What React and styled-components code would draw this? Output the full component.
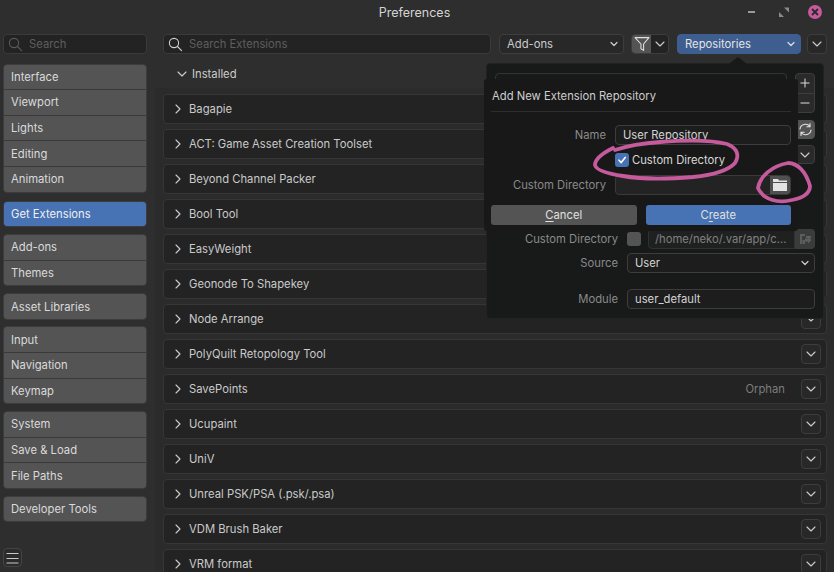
import React from 'react'
import styled, { createGlobalStyle } from 'styled-components'

const Global = createGlobalStyle`
  html, body { margin: 0; padding: 0; background: #2e2e2e; }
  body { font-family: Inter, "Noto Sans", sans-serif; font-size: 11.25px; color: #d0d0d0; overflow: hidden; }
  * { box-sizing: border-box; }
`

const Window = styled.div`
  position: relative;
  width: 834px;
  height: 572px;
  overflow: hidden;
  background: #2e2e2e;
`

const TitleBar = styled.div`
  height: 25px;
  display: flex;
  align-items: center;
  justify-content: center;
  padding-right: 5px;
  position: relative;
  font-size: 12.5px;
  color: #d4d4d4;
`

const WindowButtons = styled.div`
  position: absolute;
  right: 12px;
  top: 5px;
  display: flex;
  align-items: center;
  gap: 17px;
`

const Close = styled.div`
  width: 14px;
  height: 14px;
  border-radius: 50%;
  background: #c55a9c;
  display: flex;
  align-items: center;
  justify-content: center;
`

const Body = styled.div`
  display: flex;
  height: 547px;
`

const Sidebar = styled.div`
  width: 155px;
  flex: none;
  position: relative;
  padding: 9px 8px 0 3px;
`

const Main = styled.div`
  flex: 1;
  min-width: 0;
  display: flex;
  flex-direction: column;
`

const SearchBox = styled.div`
  height: 20px;
  width: ${p => p.$w || 'auto'};
  flex: ${p => (p.$w ? 'none' : '1')};
  display: flex;
  align-items: center;
  gap: 6px;
  padding-left: 4px;
  background: #232323;
  border: 1px solid #3a3a3a;
  border-radius: 4px;
  color: #5e5e5e;
`

const NavGroup = styled.div`
  margin-top: ${p => p.$mt}px;
  border-radius: 4px;
  overflow: hidden;
  border: 1px solid #3c3c3c;
  display: flex;
  flex-direction: column;
  gap: 1px;
  background: #3a3a3a;
`

const NavItem = styled.div`
  height: 24.6px;
  display: flex;
  align-items: center;
  padding-left: 7px;
  background: ${p => (p.$active ? '#4772b3' : '#545454')};
  color: ${p => (p.$active ? '#f0f0f0' : '#dadada')};
`

const MenuButton = styled.div`
  position: absolute;
  left: 3px;
  top: 523px;
  width: 19px;
  height: 19px;
  border: 1px solid #444;
  border-radius: 4px;
  display: flex;
  align-items: center;
  justify-content: center;
  background: #2b2b2b;
`

const Toolbar = styled.div`
  height: 20px;
  margin: 9px 7px 0 8px;
  display: flex;
  align-items: center;
`

const Select = styled.div`
  height: 20px;
  width: ${p => p.$w}px;
  margin-left: ${p => p.$ml || 0}px;
  flex: none;
  display: flex;
  align-items: center;
  justify-content: space-between;
  padding: 0 5px 0 7px;
  border-radius: 4px;
  background: ${p => (p.$blue ? '#3e5e90' : '#282828')};
  border: 1px solid ${p => (p.$blue ? '#3e5e90' : '#3d3d3d')};
  color: ${p => (p.$blue ? '#e4e4e4' : '#cccccc')};
`

const IconToggle = styled.div`
  height: 20px;
  width: 38px;
  margin-left: 7px;
  flex: none;
  display: flex;
  border-radius: 4px;
  overflow: hidden;
  border: 1px solid #3d3d3d;
  background: #232323;
`

const ToggleOn = styled.div`
  width: 19px;
  background: #545454;
  display: flex;
  align-items: center;
  justify-content: center;
`

const ToggleRest = styled.div`
  flex: 1;
  display: flex;
  align-items: center;
  justify-content: center;
`

const SquareButton = styled.div`
  width: 20px;
  height: 20px;
  margin-left: ${p => p.$ml || 0}px;
  flex: none;
  display: flex;
  align-items: center;
  justify-content: center;
  border: 1px solid #3d3d3d;
  border-radius: 4px;
  background: #282828;
`

const Heading = styled.div`
  height: 29px;
  margin-top: 5px;
  padding-left: 22px;
  display: flex;
  align-items: center;
  gap: 5px;
  color: #cccccc;
`

const List = styled.div`
  flex: 1;
  background: #2b2b2b;
  padding: 6px 7px 0 8px;
  display: flex;
  flex-direction: column;
  gap: 5px;
  overflow: hidden;
`

const Row = styled.div`
  height: 30px;
  flex: none;
  display: flex;
  align-items: center;
  padding: 0 5px 0 9px;
  gap: 6px;
  background: #232323;
  border: 1px solid #363636;
  border-radius: 4px;
  color: #cacaca;
`

const RowName = styled.span`
  flex: 1;
`

const Status = styled.span`
  color: #7c7c7c;
  margin-right: 10px;
`

const Popover = styled.div`
  position: absolute;
  left: 486px;
  top: 63px;
  width: 338px;
  height: 256px;
  background: #181a1a;
  border: 1px solid #222;
  border-radius: 4px;
  padding: 9px 8px 0 8px;
  &::before {
    content: '';
    position: absolute;
    left: 242px;
    top: -7px;
    border-left: 9px solid transparent;
    border-right: 9px solid transparent;
    border-bottom: 7px solid #181a1a;
  }
`

const PopoverTop = styled.div`
  display: flex;
  justify-content: space-between;
  height: 156px;
`

const RepoList = styled.div`
  width: 292px;
  height: 40px;
  border: 1px solid #333;
  border-radius: 4px;
`

const Tools = styled.div`
  width: 20px;
  display: flex;
  flex-direction: column;
  gap: 6px;
`

const PlusMinus = styled.div`
  height: 40px;
  border: 1px solid #3d3d3d;
  border-radius: 4px;
  display: flex;
  flex-direction: column;
  background: #2a2a2a;
`

const PmCell = styled.div`
  flex: 1;
  display: flex;
  align-items: center;
  justify-content: center;
  & + & { border-top: 1px solid #3d3d3d; }
`

const ToolButton = styled.div`
  height: 19px;
  margin-top: ${p => p.$mt || 0}px;
  border-radius: 4px;
  background: ${p => (p.$filled ? '#545454' : '#2a2a2a')};
  border: 1px solid ${p => (p.$filled ? '#545454' : '#3d3d3d')};
  display: flex;
  align-items: center;
  justify-content: center;
`

const FormRow = styled.div`
  display: flex;
  align-items: center;
  height: 20px;
  margin-top: ${p => p.$mt || 0}px;
`

const FormLabel = styled.div`
  width: ${p => p.$w}px;
  text-align: right;
  padding-right: 9px;
  flex: none;
  color: #8a8a8a;
`

const Check = styled.div`
  width: 14px;
  height: 14px;
  border-radius: 3px;
  flex: none;
  background: ${p => (p.$on ? '#4772b3' : '#545454')};
  display: flex;
  align-items: center;
  justify-content: center;
`

const Field = styled.div`
  flex: 1;
  height: 20px;
  display: flex;
  align-items: center;
  justify-content: space-between;
  padding: 0 5px 0 ${p => (p.$muted ? 6 : 7)}px;
  background: ${p => (p.$muted ? '#1f2121' : '#1d1d1d')};
  border: 1px solid ${p => (p.$muted ? '#303232' : '#3d3d3d')};
  border-radius: ${p => (p.$muted ? '4px 0 0 4px' : '4px')};
  color: ${p => (p.$muted ? '#808080' : '#d4d4d4')};
  margin-left: ${p => p.$ml || 0}px;
`

const PathIcon = styled.div`
  width: 20px;
  height: 20px;
  background: #3a3c3c;
  border-radius: 0 4px 4px 0;
  flex: none;
  display: flex;
  align-items: center;
  justify-content: center;
`

const Dialog = styled.div`
  position: absolute;
  left: 484px;
  top: 79px;
  width: 314px;
  height: 152px;
  background: #181818;
  border-radius: 3px;
  padding: 0 7px;
`

const DialogTitle = styled.div`
  height: 33px;
  display: flex;
  align-items: center;
  padding: 1px 0 0 1px;
  color: #cecece;
  border-bottom: 1px solid #2e2e2e;
`

const DialogForm = styled.div`
  margin-top: 13px;
  display: flex;
  flex-direction: column;
  gap: 5px;
`

const CheckLabel = styled.span`
  margin-left: 3px;
  color: #d8d8d8;
`

const DialogPath = styled.div`
  flex: 1;
  height: 20px;
  display: flex;
  justify-content: flex-end;
  background: #232323;
  border: 1px solid #3a3a3a;
  border-radius: 4px;
  overflow: hidden;
`

const FolderButton = styled.div`
  width: 20px;
  background: #505050;
  display: flex;
  align-items: center;
  justify-content: center;
`

const DialogActions = styled.div`
  display: flex;
  gap: 9px;
  margin-top: 10px;
`

const Action = styled.div`
  flex: 1;
  height: 20px;
  border-radius: 3px;
  display: flex;
  align-items: center;
  justify-content: center;
  background: ${p => (p.$primary ? '#4772b3' : '#545454')};
  color: #e0e0e0;
  & u { text-underline-offset: 2px; }
`

const Marks = styled.svg`
  position: absolute;
  left: 0;
  top: 0;
  pointer-events: none;
`

const Chevron = ({ dir = 'down', size = 10, color = '#cccccc' }) => (
  <svg width={size} height={size} viewBox="0 0 10 10" fill="none" stroke={color} strokeWidth="1.1" strokeLinecap="round" strokeLinejoin="round">
    {dir === 'down' ? <path d="M1 3 L5 7 L9 3" /> : <path d="M3 1 L7 5 L3 9" />}
  </svg>
)

const SmallChevron = ({ color = '#cfcfcf' }) => (
  <svg width="8" height="8" viewBox="0 0 8 8" fill="none" stroke={color} strokeWidth="1.2" strokeLinecap="round" strokeLinejoin="round">
    <path d="M1 2.5 L4 5.5 L7 2.5" />
  </svg>
)

const Magnifier = ({ color }) => (
  <svg width="15" height="15" viewBox="0 0 15 15" fill="none" stroke={color} strokeWidth="1.1" strokeLinecap="round">
    <circle cx="6" cy="6" r="4.6" />
    <path d="M9.5 9.5 L13.6 13.6" />
  </svg>
)

const groups = [
  { items: ['Interface', 'Viewport', 'Lights', 'Editing', 'Animation'], mt: 9.6 },
  { items: ['Get Extensions'], mt: 8 },
  { items: ['Add-ons', 'Themes'], mt: 7 },
  { items: ['Asset Libraries'], mt: 7 },
  { items: ['Input', 'Navigation', 'Keymap'], mt: 6.4 },
  { items: ['System', 'Save & Load', 'File Paths'], mt: 7 },
  { items: ['Developer Tools'], mt: 7 },
]

const extensions = [
  'Bagapie',
  'ACT: Game Asset Creation Toolset',
  'Beyond Channel Packer',
  'Bool Tool',
  'EasyWeight',
  'Geonode To Shapekey',
  'Node Arrange',
  'PolyQuilt Retopology Tool',
  'SavePoints',
  'Ucupaint',
  'UniV',
  'Unreal PSK/PSA (.psk/.psa)',
  'VDM Brush Baker',
  'VRM format',
]

export default function App() {
  return (
    <Window>
      <Global />
      <TitleBar>
        Preferences
        <WindowButtons>
          <svg width="14" height="14" viewBox="0 0 14 14"><rect x="2" y="6" width="7" height="2" fill="#9a9a9a" /></svg>
          <svg width="14" height="14" viewBox="0 0 14 14" fill="#8a8a8a"><path d="M7 2.5 H12 V7.5 Z" /><path d="M2 7 L7 12 H2 Z" /></svg>
          <Close>
            <svg width="8" height="8" viewBox="0 0 8 8" stroke="#2b2b2b" strokeWidth="1.8"><path d="M1 1 L7 7 M7 1 L1 7" /></svg>
          </Close>
        </WindowButtons>
      </TitleBar>
      <Body>
        <Sidebar>
          <SearchBox>
            <Magnifier color="#5a5a5a" />
            Search
          </SearchBox>
          {groups.map(g => (
            <NavGroup key={g.items[0]} $mt={g.mt}>
              {g.items.map(item => (
                <NavItem key={item} $active={item === 'Get Extensions'}>{item}</NavItem>
              ))}
            </NavGroup>
          ))}
          <MenuButton>
            <svg width="13" height="12" viewBox="0 0 13 12" stroke="#c8c8c8" strokeWidth="1"><path d="M0.5 1.5 H12.5 M0.5 6.5 H12.5 M0.5 11 H12.5" /></svg>
          </MenuButton>
        </Sidebar>
        <Main>
          <Toolbar>
            <SearchBox $w="328px">
              <Magnifier color="#d0d0d0" />
              Search Extensions
            </SearchBox>
            <Select $w={125} $ml={8}>Add-ons <SmallChevron /></Select>
            <IconToggle>
              <ToggleOn>
                <svg width="16" height="16" viewBox="0 0 15 15" fill="none" stroke="#e0e0e0" strokeWidth="1" strokeLinejoin="round">
                  <path d="M1 1.5 H14 L9 7.5 V13.5 L6.5 12 V7.5 Z" />
                </svg>
              </ToggleOn>
              <ToggleRest><Chevron /></ToggleRest>
            </IconToggle>
            <Select $w={124} $ml={8} $blue>Repositories <SmallChevron color="#e0e0e0" /></Select>
            <SquareButton $ml={6}><Chevron /></SquareButton>
          </Toolbar>
          <Heading>
            <Chevron />
            Installed
          </Heading>
          <List>
            {extensions.map(name => (
              <Row key={name}>
                <Chevron dir="right" />
                <RowName>{name}</RowName>
                {name === 'SavePoints' && <Status>Orphan</Status>}
                <SquareButton><Chevron /></SquareButton>
              </Row>
            ))}
          </List>
        </Main>
      </Body>

      <Popover>
        <PopoverTop>
          <RepoList />
          <Tools>
            <PlusMinus>
              <PmCell>
                <svg width="10" height="10" viewBox="0 0 10 10" stroke="#dcdcdc" strokeWidth="1"><path d="M0.5 5 H9.5 M5 0.5 V9.5" /></svg>
              </PmCell>
              <PmCell>
                <svg width="10" height="10" viewBox="0 0 10 10" stroke="#dcdcdc" strokeWidth="1"><path d="M0.5 5 H9.5" /></svg>
              </PmCell>
            </PlusMinus>
            <ToolButton $filled $mt={1}>
              <svg width="15" height="15" viewBox="0 0 15 15" fill="none" stroke="#e4e4e4" strokeWidth="1.1" strokeLinecap="round">
                <path d="M2 7 A5.5 5 0 0 1 12 4.5 M12 1.5 V4.8 H8.8" />
                <path d="M13 8 A5.5 5 0 0 1 3 10.5 M3 13.5 V10.2 H6.2" />
              </svg>
            </ToolButton>
            <ToolButton><Chevron /></ToolButton>
          </Tools>
        </PopoverTop>
        <FormRow>
          <FormLabel $w={132}>Custom Directory</FormLabel>
          <Check />
          <Field $muted $ml={7}>
            /home/neko/.var/app/c...
          </Field>
          <PathIcon>
            <svg width="13" height="12" viewBox="0 0 13 12" fill="#5c5e5e"><path d="M1 1 H6 V3 H12 V5 H7 V3 H3 V11 H1 Z M6 5.5 L9 5.5 V3.5 L12.5 7 L9 10.5 V8.5 H6 V11 H3.5 V7 H6 Z" /></svg>
          </PathIcon>
        </FormRow>
        <FormRow $mt={4}>
          <FormLabel $w={132}>Source</FormLabel>
          <Field>User <SmallChevron /></Field>
        </FormRow>
        <FormRow $mt={16}>
          <FormLabel $w={132}>Module</FormLabel>
          <Field>user_default</Field>
        </FormRow>
      </Popover>

      <Dialog>
        <DialogTitle>Add New Extension Repository</DialogTitle>
        <DialogForm>
          <FormRow>
            <FormLabel $w={124}>Name</FormLabel>
            <Field>User Repository</Field>
          </FormRow>
          <FormRow>
            <FormLabel $w={124} />
            <Check $on>
              <svg width="10" height="10" viewBox="0 0 10 10" fill="none" stroke="#fff" strokeWidth="1.6" strokeLinecap="round" strokeLinejoin="round"><path d="M2 5.2 L4.2 7.6 L8.2 2.4" /></svg>
            </Check>
            <CheckLabel>Custom Directory</CheckLabel>
          </FormRow>
          <FormRow>
            <FormLabel $w={124}>Custom Directory</FormLabel>
            <DialogPath>
              <FolderButton>
                <svg width="14" height="12" viewBox="0 0 14 12" fill="#e4e4e4"><path d="M0 0 H5 L6 1.5 H14 V3 H0 Z M0 4 H14 V12 H0 Z" /></svg>
              </FolderButton>
            </DialogPath>
          </FormRow>
        </DialogForm>
        <DialogActions>
          <Action><span><u>C</u>ancel</span></Action>
          <Action $primary><span>C<u>r</u>eate</span></Action>
        </DialogActions>
      </Dialog>

      <Marks width="834" height="572" viewBox="0 0 834 572" fill="none" stroke="#c55a9c" strokeWidth="3.8" strokeLinecap="round">
        <path d="M613 148 C603 153 595 159 595 165 C596 171 610 174 623 176 C640 179 668 179 693 177 C712 175 728 171 735 163 C740 155 737 148 727 144 C712 140 685 140 660 142 C645 143 630 145 615 150" />
        <path d="M758 188 C760 176 772 166 788 163 C798 163 806 172 810 186 C810 194 802 198 792 200 C780 203 770 200 764 196 C761 193 759 191 758 188" />
      </Marks>
    </Window>
  )
}
